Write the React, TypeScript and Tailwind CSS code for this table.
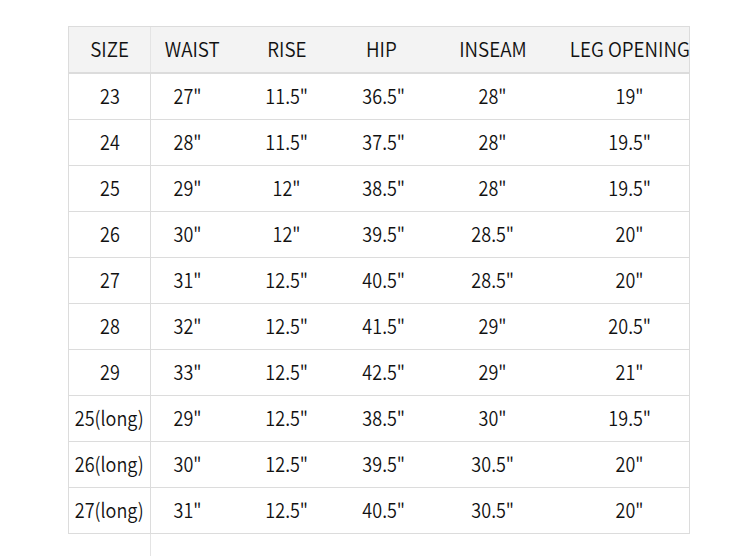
import React from "react";

const header = ["SIZE", "WAIST", "RISE", "HIP", "INSEAM", "LEG OPENING"];
const rows: string[][] = [
  ["23", '27"', '11.5"', '36.5"', '28"', '19"'],
  ["24", '28"', '11.5"', '37.5"', '28"', '19.5"'],
  ["25", '29"', '12"', '38.5"', '28"', '19.5"'],
  ["26", '30"', '12"', '39.5"', '28.5"', '20"'],
  ["27", '31"', '12.5"', '40.5"', '28.5"', '20"'],
  ["28", '32"', '12.5"', '41.5"', '29"', '20.5"'],
  ["29", '33"', '12.5"', '42.5"', '29"', '21"'],
  ["25(long)", '29"', '12.5"', '38.5"', '30"', '19.5"'],
  ["26(long)", '30"', '12.5"', '39.5"', '30.5"', '20"'],
  ["27(long)", '31"', '12.5"', '40.5"', '30.5"', '20"'],
];

const grid = "grid grid-cols-[82px_82px_108px_86px_132px_130px]";

const headPad = ["", "", "", "pr-[6px]", "", "pl-3"];
const dataPad = ["border-r border-[#dcdcdc]", "pr-2", "", "", "", "pl-3"];

export default function App() {
  return (
    <div
      className="w-[750px] h-[556px] bg-white pt-[26px] pl-[68px] overflow-hidden text-[20px] font-[350] text-[#111111]"
      style={{ fontFamily: '"Noto Sans CJK SC", "Noto Sans", sans-serif' }}
    >
      <div className="w-[622px]">
        <div className="border-x border-t border-[#dcdcdc]">
          <div className={`${grid} h-[47px] bg-[#f3f3f3] border-b-2 border-[#dcdcdc]`}>
            {header.map((h, i) => (
              <div
                key={h}
                className={`flex items-center justify-center whitespace-nowrap leading-none pb-[2px] ${i === 0 ? "border-r border-[#e4e4e4]" : ""} ${headPad[i]}`}
              >
                <span className="inline-block scale-x-[0.94]">{h}</span>
              </div>
            ))}
          </div>
          {rows.map((r, ri) => (
            <div key={ri} className={`${grid} h-[46px] border-b border-[#dcdcdc]`}>
              {r.map((c, i) => (
                <div
                  key={i}
                  className={`flex items-center justify-center whitespace-nowrap leading-none pb-[2px] ${dataPad[i]}`}
                >
                  <span className="inline-block scale-x-[0.9]">{c}</span>
                </div>
              ))}
            </div>
          ))}
        </div>
        <div className="pl-px">
          <div className="w-[82px] h-[24px] border-r border-[#e4e4e4]" />
        </div>
      </div>
    </div>
  );
}
